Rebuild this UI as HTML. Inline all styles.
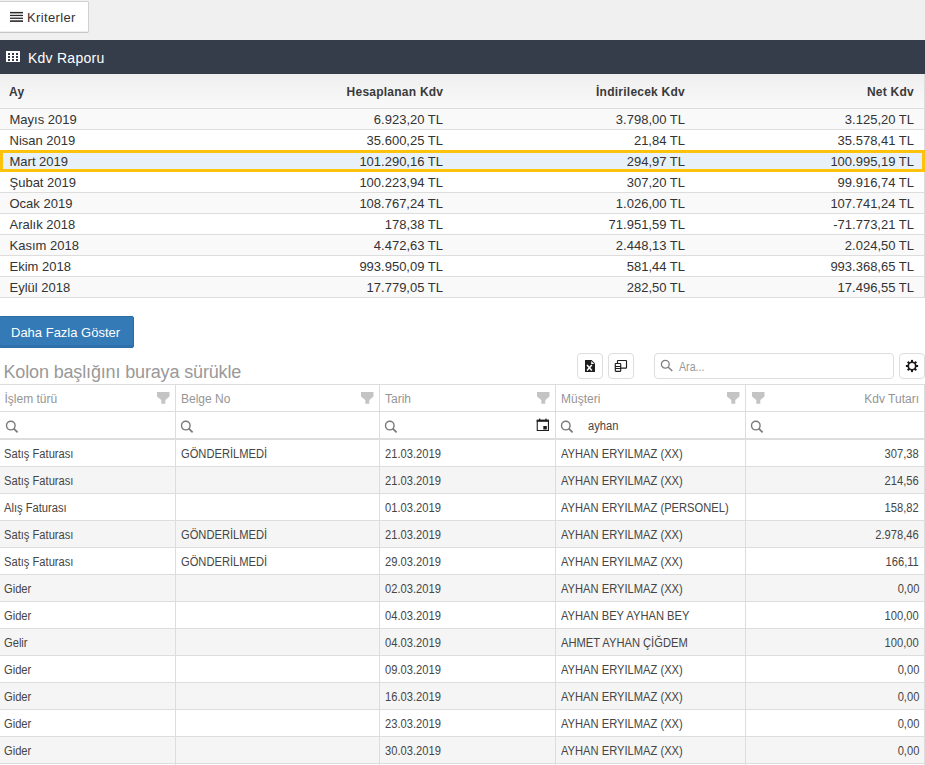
<!DOCTYPE html>
<html><head><meta charset="utf-8">
<style>
*{box-sizing:border-box;margin:0;padding:0}
html,body{width:925px;height:765px;overflow:hidden;background:#fff;font-family:"Liberation Sans",sans-serif;color:#333;position:relative}
.abs{position:absolute}
svg{position:absolute;display:block}
.topbar{position:absolute;left:0;top:0;width:925px;height:40px;background:#f0f0f0}
.krit{position:absolute;left:-3px;top:1px;width:92px;height:32px;background:#fff;border:1px solid #d0d0d0;border-bottom-color:#c6c6c6;border-radius:2px;box-shadow:inset 0 -1px 0 #eee}
.krit .t{position:absolute;left:29px;top:8px;font-size:13px;line-height:16px;color:#333;letter-spacing:.35px}
.phead{position:absolute;left:0;top:40px;width:925px;height:34px;background:#363d4a}
.phead .t{position:absolute;left:28px;top:9px;font-size:14px;line-height:18px;color:#fff;letter-spacing:.25px}
.rh{position:absolute;left:0;top:74px;width:925px;height:34px;background:linear-gradient(#efefef,#f9f9f9);border-right:1px solid #ddd}
.rh span{position:absolute;top:10px;font-size:12px;line-height:16px;font-weight:bold;color:#3a3a3a;letter-spacing:.24px;white-space:nowrap}
.rr{position:absolute;left:0;width:925px;height:21px;border-top:1px solid #ddd;border-right:1px solid #ddd}
.rr span{position:absolute;top:1px;font-size:13px;line-height:20px;color:#333;white-space:nowrap}
.odd{background:#f9f9f9}
.c0{left:9.5px}
.rh .c0{left:9px}
.c1{right:481px}
.c2{right:239px}
.c3{right:10px}
.rh .c1{right:481px;margin-right:-.3px}
.sel{background:#e8f0f8}
.selbox{position:absolute;left:0;top:150px;width:925px;height:22px;border:3px solid #fdc20b}
.rbot{position:absolute;left:0;top:297px;width:925px;height:1px;background:#ddd}
.more{position:absolute;left:-1px;top:316px;width:135px;height:32px;background:#337ab7;border:1px solid #2e6da4;border-radius:2px;box-shadow:inset 0 -2px 0 rgba(0,0,0,.07);color:#fff;font-size:13px;line-height:16px;padding-left:11px;padding-top:8px}
.grp{position:absolute;left:3.5px;top:361px;font-size:18px;line-height:22px;color:#999;letter-spacing:-.15px;white-space:nowrap}
.tb{position:absolute;top:353px;width:26px;height:26px;border:1px solid #ddd;border-radius:4px;background:#fff}
.search{position:absolute;left:654px;top:353px;width:240px;height:26px;border:1px solid #ddd;border-radius:4px;background:#fff}
.search .t{position:absolute;left:24px;top:6px;font-size:12px;line-height:14px;color:#999;transform:scaleX(.89);transform-origin:0 0}
.gtop{position:absolute;left:0;top:384px;width:925px;height:1px;background:#ddd}
.vl{position:absolute;width:1px;background:#ddd}
.hl{position:absolute;left:0;width:925px;background:#ddd}
.gh span{position:absolute;top:392px;font-size:12px;line-height:14px;color:#959595;white-space:nowrap}
.gr{position:absolute;left:0;width:925px;height:27px;border-bottom:1px solid #ddd}
.gr span{position:absolute;top:7px;font-size:12px;line-height:14px;color:#454545;white-space:nowrap;transform:scaleX(.93);transform-origin:0 0}
.gr span.g4{transform-origin:100% 0}
.gs{background:#f5f5f5}
.g0{left:4px}.g1{left:181px}.g2{left:385px}.g3{left:561px}.g4{right:6px}
.gh .g0{left:4.5px}

</style></head><body>
<div class="topbar">
  <div class="krit"><span class="t">Kriterler</span></div>
  <svg style="left:0;top:0" width="30" height="30" viewBox="0 0 30 30"><g fill="#2a2a2a"><rect x="10" y="11.9" width="13" height="1.5"/><rect x="10" y="14.8" width="13" height="1.3"/><rect x="10" y="17.6" width="13" height="1.3"/><rect x="10" y="20.3" width="13" height="1.6"/></g></svg>
</div>
<div class="phead"><span class="t">Kdv Raporu</span></div>
<svg style="left:6px;top:51px" width="14" height="11" viewBox="0 0 14 11"><path fill="#fff" fill-rule="evenodd" d="M0 0H14V11H0Z M2 2H4V4H2Z M6 2H8V4H6Z M10 2H12V4H10Z M2 5H4V7H2Z M6 5H8V7H6Z M10 5H12V7H10Z M2 8H4V10H2Z M6 8H8V10H6Z M10 8H12V10H10Z"/></svg>
<div class="rh"><span class="c0">Ay</span><span class="c1">Hesaplanan Kdv</span><span class="c2">İndirilecek Kdv</span><span class="c3">Net Kdv</span></div>
<div class="rr odd" style="top:108px"><span class="c0">Mayıs 2019</span><span class="c1">6.923,20 TL</span><span class="c2">3.798,00 TL</span><span class="c3">3.125,20 TL</span></div>
<div class="rr" style="top:129px"><span class="c0">Nisan 2019</span><span class="c1">35.600,25 TL</span><span class="c2">21,84 TL</span><span class="c3">35.578,41 TL</span></div>
<div class="rr sel" style="top:150px"><span class="c0">Mart 2019</span><span class="c1">101.290,16 TL</span><span class="c2">294,97 TL</span><span class="c3">100.995,19 TL</span></div>
<div class="rr" style="top:171px"><span class="c0">Şubat 2019</span><span class="c1">100.223,94 TL</span><span class="c2">307,20 TL</span><span class="c3">99.916,74 TL</span></div>
<div class="rr odd" style="top:192px"><span class="c0">Ocak 2019</span><span class="c1">108.767,24 TL</span><span class="c2">1.026,00 TL</span><span class="c3">107.741,24 TL</span></div>
<div class="rr" style="top:213px"><span class="c0">Aralık 2018</span><span class="c1">178,38 TL</span><span class="c2">71.951,59 TL</span><span class="c3">-71.773,21 TL</span></div>
<div class="rr odd" style="top:234px"><span class="c0">Kasım 2018</span><span class="c1">4.472,63 TL</span><span class="c2">2.448,13 TL</span><span class="c3">2.024,50 TL</span></div>
<div class="rr" style="top:255px"><span class="c0">Ekim 2018</span><span class="c1">993.950,09 TL</span><span class="c2">581,44 TL</span><span class="c3">993.368,65 TL</span></div>
<div class="rr odd" style="top:276px"><span class="c0">Eylül 2018</span><span class="c1">17.779,05 TL</span><span class="c2">282,50 TL</span><span class="c3">17.496,55 TL</span></div>
<div class="rbot"></div>
<div class="selbox"></div>

<div class="more">Daha Fazla Göster</div>
<div class="grp">Kolon başlığını buraya sürükle</div>
<div class="tb" style="left:577px"></div>
<svg style="left:585px;top:360px" width="10" height="12" viewBox="0 0 10 12"><path fill="#1e1e1e" d="M0 0H6.6L10 3.4V12H0Z"/><path fill="#fff" d="M6.2 0.9V4.1H9.2Z"/><path stroke="#fff" stroke-width="1.5" d="M2 5L6.8 10.6M6.8 5L2 10.6"/></svg>
<div class="tb" style="left:608px"></div>
<svg style="left:614px;top:359px" width="14" height="14" viewBox="0 0 14 14"><rect x="3.5" y="1.5" width="9" height="7.6" rx="0.6" fill="none" stroke="#1e1e1e" stroke-width="1.15"/><rect x="1.3" y="4.5" width="5.4" height="7.8" rx="0.5" fill="#fff" stroke="#1e1e1e" stroke-width="1.15"/><path d="M1 7.5H7M1 9.5H7" stroke="#1e1e1e" stroke-width="1"/></svg>
<div class="search"><span class="t">Ara...</span></div>
<svg style="left:660px;top:359px" width="14" height="13" viewBox="0 0 14 13"><circle cx="5.3" cy="5.2" r="3.9" fill="none" stroke="#808080" stroke-width="1.3"/><path d="M8 8L12.3 12" stroke="#808080" stroke-width="1.5"/></svg>
<div class="tb" style="left:899px"></div>
<svg style="left:904px;top:358px" width="16" height="16" viewBox="0 0 16 16"><g fill="#1a1a1a"><circle cx="8" cy="8" r="4.6"/><rect x="7" y="1.9" width="2" height="12.2"/><rect x="7" y="1.9" width="2" height="12.2" transform="rotate(90 8 8)"/><rect x="7" y="1.9" width="2" height="12.2" transform="rotate(45 8 8)"/><rect x="7" y="1.9" width="2" height="12.2" transform="rotate(-45 8 8)"/></g><circle cx="8" cy="8" r="2.9" fill="#fff"/></svg>

<div class="gtop"></div>
<div class="hl" style="top:411px;height:1px"></div>
<div class="gh"><span class="g0">İşlem türü</span><span class="g1">Belge No</span><span class="g2">Tarih</span><span class="g3">Müşteri</span><span class="g4">Kdv Tutarı</span></div>
<svg style="left:0;top:388px" width="925" height="20" viewBox="0 0 925 20"><g fill="#c4c4c4"><path d="M157 4H169.5V8.5L165.3 12V15.7H161.3V12L157 8.5Z"/><path transform="translate(204 0)" d="M157 4H169.5V8.5L165.3 12V15.7H161.3V12L157 8.5Z"/><path transform="translate(380 0)" d="M157 4H169.5V8.5L165.3 12V15.7H161.3V12L157 8.5Z"/><path transform="translate(570 0)" d="M157 4H169.5V8.5L165.3 12V15.7H161.3V12L157 8.5Z"/><path transform="translate(595 0)" d="M157 4H169.5V8.5L165.3 12V15.7H161.3V12L157 8.5Z"/></g></svg>
<svg style="left:0;top:418.5px" width="925" height="16" viewBox="0 0 925 16"><g fill="none" stroke="#7a7a7a"><g transform="translate(0 0)"><circle cx="10.8" cy="6.6" r="4.3" stroke-width="1.4"/><path d="M13.8 9.6L17.6 13.4" stroke-width="1.7"/></g><g transform="translate(175 0)"><circle cx="10.8" cy="6.6" r="4.3" stroke-width="1.4"/><path d="M13.8 9.6L17.6 13.4" stroke-width="1.7"/></g><g transform="translate(379 0)"><circle cx="10.8" cy="6.6" r="4.3" stroke-width="1.4"/><path d="M13.8 9.6L17.6 13.4" stroke-width="1.7"/></g><g transform="translate(555 0)"><circle cx="10.8" cy="6.6" r="4.3" stroke-width="1.4"/><path d="M13.8 9.6L17.6 13.4" stroke-width="1.7"/></g><g transform="translate(745 0)"><circle cx="10.8" cy="6.6" r="4.3" stroke-width="1.4"/><path d="M13.8 9.6L17.6 13.4" stroke-width="1.7"/></g></g></svg>
<svg style="left:536px;top:418px" width="14" height="14" viewBox="0 0 14 14"><g fill="#1e1e1e"><rect x="0.7" y="1.6" width="12.3" height="2.2"/><rect x="3" y="0.6" width="1.3" height="1.5"/><rect x="9.3" y="0.6" width="1.3" height="1.5"/><path fill="none" stroke="#1e1e1e" stroke-width="1.1" d="M1.25 2.5V12.55H12.45V2.5"/><rect x="7.3" y="8" width="3.5" height="3.5"/></g></svg>
<span class="abs" style="left:588px;top:419px;font-size:12px;line-height:14px;color:#454545;transform:scaleX(.93);transform-origin:0 0">ayhan</span>
<div class="hl" style="top:438px;height:2px"></div>
<div class="gr" style="top:440px"><span class="g0">Satış Faturası</span><span class="g1">GÖNDERİLMEDİ</span><span class="g2">21.03.2019</span><span class="g3">AYHAN ERYILMAZ (XX)</span><span class="g4">307,38</span></div>
<div class="gr gs" style="top:467px"><span class="g0">Satış Faturası</span><span class="g2">21.03.2019</span><span class="g3">AYHAN ERYILMAZ (XX)</span><span class="g4">214,56</span></div>
<div class="gr" style="top:494px"><span class="g0">Alış Faturası</span><span class="g2">01.03.2019</span><span class="g3">AYHAN ERYILMAZ (PERSONEL)</span><span class="g4">158,82</span></div>
<div class="gr gs" style="top:521px"><span class="g0">Satış Faturası</span><span class="g1">GÖNDERİLMEDİ</span><span class="g2">21.03.2019</span><span class="g3">AYHAN ERYILMAZ (XX)</span><span class="g4">2.978,46</span></div>
<div class="gr" style="top:548px"><span class="g0">Satış Faturası</span><span class="g1">GÖNDERİLMEDİ</span><span class="g2">29.03.2019</span><span class="g3">AYHAN ERYILMAZ (XX)</span><span class="g4">166,11</span></div>
<div class="gr gs" style="top:575px"><span class="g0">Gider</span><span class="g2">02.03.2019</span><span class="g3">AYHAN ERYILMAZ (XX)</span><span class="g4">0,00</span></div>
<div class="gr" style="top:602px"><span class="g0">Gider</span><span class="g2">04.03.2019</span><span class="g3">AYHAN BEY AYHAN BEY</span><span class="g4">100,00</span></div>
<div class="gr gs" style="top:629px"><span class="g0">Gelir</span><span class="g2">04.03.2019</span><span class="g3">AHMET AYHAN ÇİĞDEM</span><span class="g4">100,00</span></div>
<div class="gr" style="top:656px"><span class="g0">Gider</span><span class="g2">09.03.2019</span><span class="g3">AYHAN ERYILMAZ (XX)</span><span class="g4">0,00</span></div>
<div class="gr gs" style="top:683px"><span class="g0">Gider</span><span class="g2">16.03.2019</span><span class="g3">AYHAN ERYILMAZ (XX)</span><span class="g4">0,00</span></div>
<div class="gr" style="top:710px"><span class="g0">Gider</span><span class="g2">23.03.2019</span><span class="g3">AYHAN ERYILMAZ (XX)</span><span class="g4">0,00</span></div>
<div class="gr gs" style="top:737px"><span class="g0">Gider</span><span class="g2">30.03.2019</span><span class="g3">AYHAN ERYILMAZ (XX)</span><span class="g4">0,00</span></div>
<div class="vl" style="left:175px;top:385px;height:380px"></div>
<div class="vl" style="left:379px;top:385px;height:380px"></div>
<div class="vl" style="left:555px;top:385px;height:380px"></div>
<div class="vl" style="left:745px;top:385px;height:380px"></div>
<div class="vl" style="left:924px;top:385px;height:380px"></div>

</body></html>
